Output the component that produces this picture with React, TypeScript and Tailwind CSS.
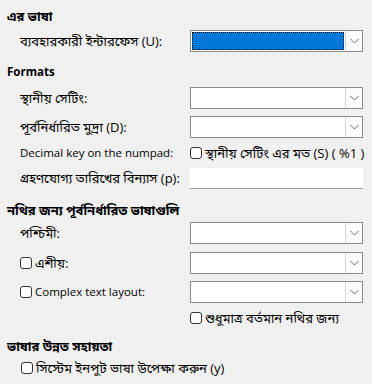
import React from 'react';

/**
 * Language settings panel (Bengali UI) — dropdowns, checkboxes and a text field
 * on a light dialog background.
 */

const FONT = "font-['Open_Sans','Noto_Sans_Bengali','Noto_Sans',sans-serif]";

// Bengali glyphs render small next to the Latin face, so bump them up a bit
const sizeFor = (s: string) => (/[\u0980-\u09FF]/.test(s) ? 'text-[13px]' : 'text-[11.5px]');

function Chevron() {
  return (
    <svg width="9" height="6" viewBox="0 0 9 6" className="block">
      <path d="M0.5 1 L4.5 5 L8.5 1" fill="none" stroke="#6b6b6b" strokeWidth="1" />
    </svg>
  );
}

function Dropdown({ focused = false }: { focused?: boolean }) {
  return (
    <div className="flex h-[22px] w-[173px] border border-[#8a8a8a] bg-white">
      <div className="flex-1 p-[1px]">
        {focused && (
          <div className="h-full w-full border border-dotted border-[#111] bg-[#0078d7]" />
        )}
      </div>
      <div className="flex w-[17px] items-center justify-center border-l border-[#d6d6d6] bg-[#fbfbfb]">
        <Chevron />
      </div>
    </div>
  );
}

function Checkbox() {
  return <span className="h-[12px] w-[12px] shrink-0 rounded-[3px] border border-[#333] bg-white" />;
}

function Text({ children }: { children: string }) {
  return <span className={sizeFor(children)}>{children}</span>;
}

function Heading({ children, className = '' }: { children: string; className?: string }) {
  return (
    <div className={`flex h-[16px] items-center pl-[7px] font-bold ${className}`}>
      <Text>{children}</Text>
    </div>
  );
}

function Row({
  label,
  check = false,
  children,
  className = '',
}: {
  label: string;
  check?: boolean;
  children: React.ReactNode;
  className?: string;
}) {
  return (
    <div className={`flex h-[22px] items-center pl-[20px] ${className}`}>
      <div className="flex w-[170px] items-center gap-[3px] whitespace-nowrap">
        {check && <Checkbox />}
        <Text>{label}</Text>
      </div>
      {children}
    </div>
  );
}

export default function App() {
  return (
    <div className={`h-[384px] w-[372px] overflow-hidden bg-[#f0f0f0] pt-[8px] leading-none text-black ${FONT}`}>
      <Heading>এর ভাষা</Heading>
      <Row label="ব্যবহারকারী ইন্টারফেস (U):" className="mt-[6px]">
        <Dropdown focused />
      </Row>

      <Heading className="mt-[12px]">Formats</Heading>
      <Row label="স্থানীয় সেটিং:" className="mt-[7px]">
        <Dropdown />
      </Row>
      <Row label="পূর্বনির্ধারিত মুদ্রা (D):" className="mt-[7px]">
        <Dropdown />
      </Row>
      <Row label="Decimal key on the numpad:" className="mt-[4px]">
        <div className="flex items-center gap-[3px] whitespace-nowrap">
          <Checkbox />
          <Text>স্থানীয় সেটিং এর মত (S) ( %1 )</Text>
        </div>
      </Row>
      <Row label="গ্রহণযোগ্য তারিখের বিন্যাস (p):" className="mt-[3px]">
        <div className="h-[21px] w-[173px] border-b border-[#a0a0a0] bg-white" />
      </Row>

      <Heading className="mt-[13px]">নথির জন্য পূর্বনির্ধারিত ভাষাগুলি</Heading>
      <Row label="পশ্চিমী:" className="mt-[4px]">
        <Dropdown />
      </Row>
      <Row label="এশীয়:" check className="mt-[8px]">
        <Dropdown />
      </Row>
      <Row label="Complex text layout:" check className="mt-[7px]">
        <Dropdown />
      </Row>
      <div className="mt-[7px] flex h-[16px] items-center gap-[3px] pl-[190px] whitespace-nowrap">
        <Checkbox />
        <Text>শুধুমাত্র বর্তমান নথির জন্য</Text>
      </div>

      <Heading className="mt-[12px]">ভাষার উন্নত সহায়তা</Heading>
      <div className="mt-[6px] flex h-[16px] items-center gap-[3px] pl-[21px] whitespace-nowrap">
        <Checkbox />
        <Text>সিস্টেম ইনপুট ভাষা উপেক্ষা করুন (y)</Text>
      </div>
    </div>
  );
}
